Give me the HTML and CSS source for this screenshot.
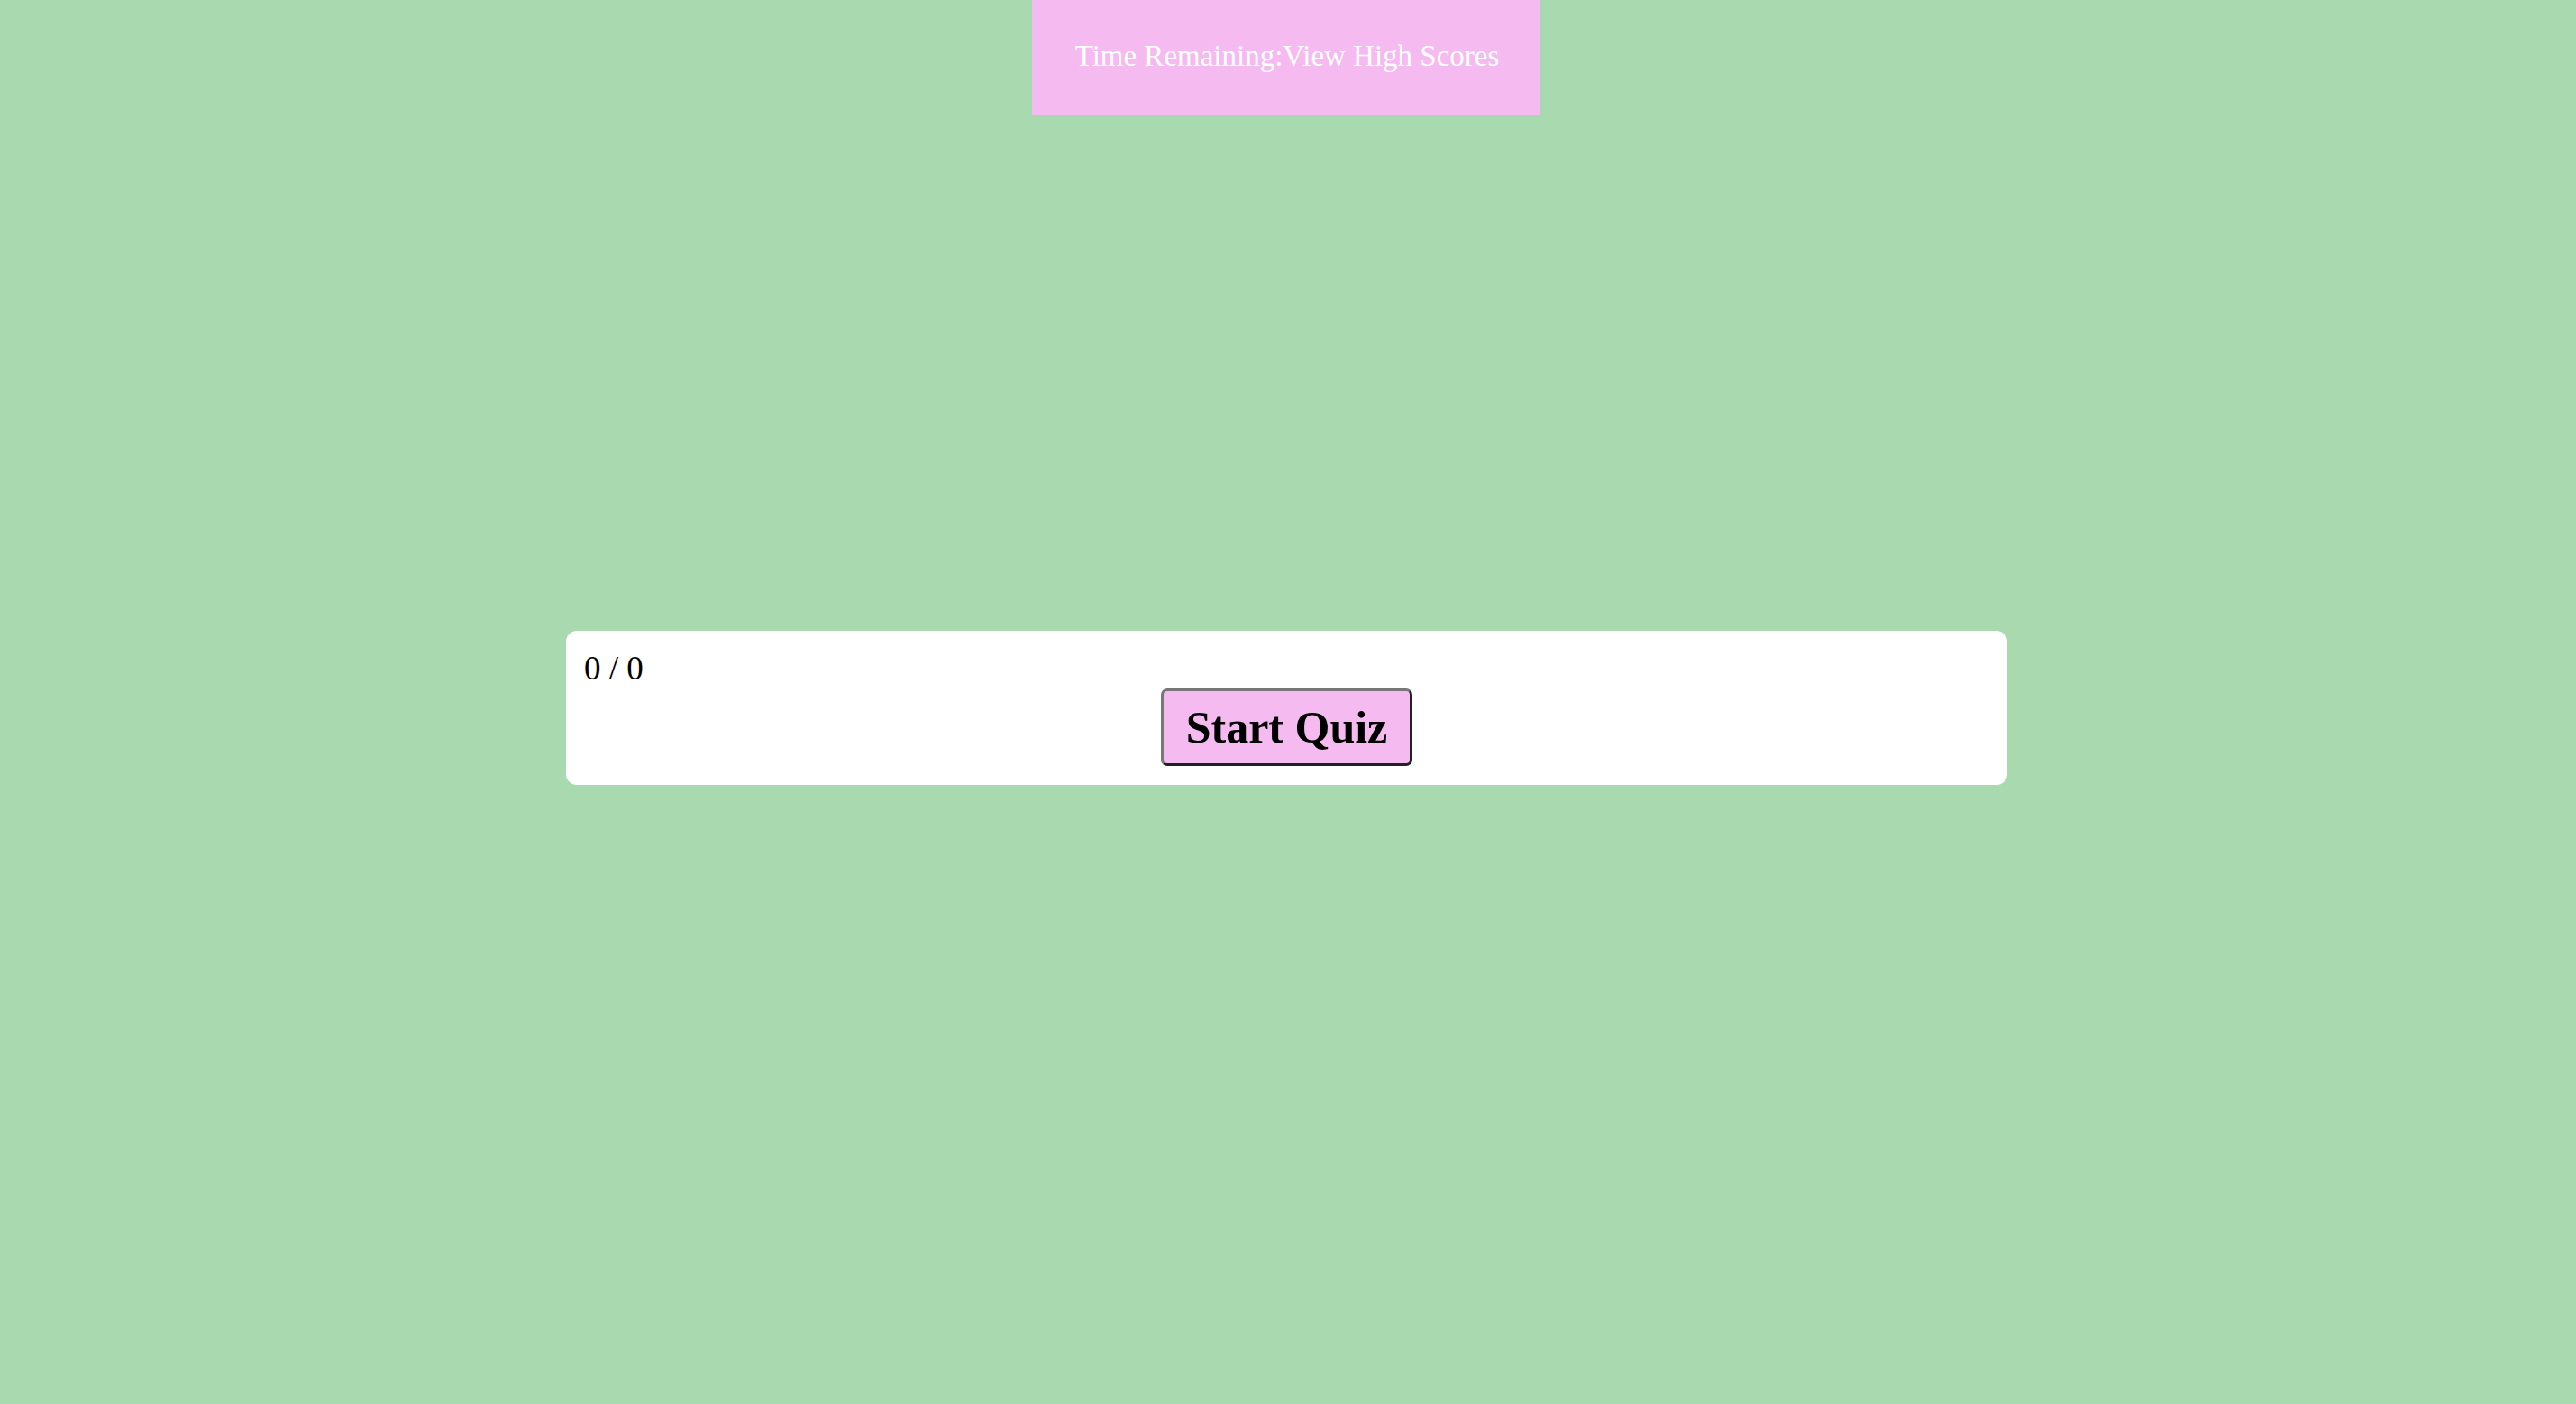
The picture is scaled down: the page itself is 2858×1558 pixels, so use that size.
FILE: index.html
```html
<!DOCTYPE html>
<html lang="en">
<head>
<meta charset="utf-8">
<title>Quiz</title>
<link rel="stylesheet" href="styles.css">
</head>
<body>
<header class="topbar">
  <span class="timer">Time Remaining:</span><a class="scores-link" href="#">View High Scores</a>
</header>
<main class="stage">
  <section class="card">
    <div class="progress">0 / 0</div>
    <div class="actions">
      <button class="start-btn" type="button">Start Quiz</button>
    </div>
  </section>
</main>
</body>
</html>
```

FILE: styles.css
```css
html, body {
  margin: 0;
  padding: 0;
}

body {
  background: rgb(169, 217, 175);
  min-height: 100vh;
  font-family: "Liberation Serif", "Times New Roman", serif;
  display: flex;
  flex-direction: column;
  align-items: center;
}

.topbar {
  background: rgb(245, 186, 239);
  color: #ffffff;
  width: 564px;
  height: 128px;
  box-sizing: border-box;
  display: flex;
  align-items: center;
  justify-content: center;
  font-size: 33px;
  padding: 0 0 4px 2px;
  margin-right: 4px;
}

.scores-link {
  color: #ffffff;
  text-decoration: none;
}

.stage {
  width: 100%;
  display: flex;
  justify-content: center;
  padding-top: 572px;
}

.card {
  width: 1599px;
  height: 171px;
  box-sizing: border-box;
  background: #ffffff;
  border-radius: 12px;
  padding: 20px 20px;
  margin-right: 3px;
}

.progress {
  font-size: 37px;
  line-height: 43px;
  color: #000;
}

.actions {
  display: flex;
  justify-content: center;
  margin-top: 1px;
}

.start-btn {
  font-family: "Liberation Serif", "Times New Roman", serif;
  font-weight: bold;
  font-size: 50px;
  line-height: 58px;
  color: #000;
  background: rgb(245, 186, 239);
  width: 279px;
  height: 86px;
  padding: 0;
  border-style: solid;
  border-width: 3px;
  border-color: #777 #222 #222 #777;
  border-radius: 7px;
  cursor: pointer;
}
```
